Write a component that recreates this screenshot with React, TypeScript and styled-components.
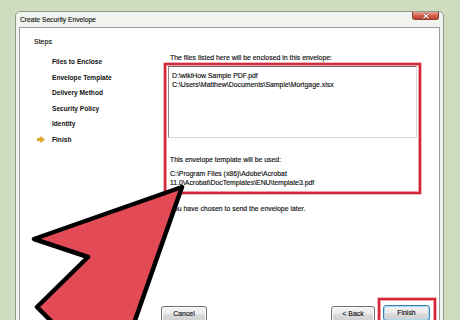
import React from 'react';
import styled, { createGlobalStyle } from 'styled-components';

const GlobalStyle = createGlobalStyle`
  html, body {
    margin: 0;
    padding: 0;
    background: #cfdcc0;
    font-family: "Liberation Sans", Arial, sans-serif;
    color: #111;
  }
`;

const Page = styled.div`
  position: relative;
  width: 460px;
  height: 320px;
  overflow: hidden;
  padding-top: 11px;
  box-sizing: border-box;
  -webkit-text-stroke: 0.15px currentColor;
`;

// окно мастера
const Window = styled.div`
  width: 429px;
  margin-left: 15px;
  box-sizing: border-box;
  border: 1px solid #8d9a8a;
  border-radius: 5px 5px 0 0;
  background: #f1f4ee;
  padding: 0 3px;
`;

const TitleBar = styled.div`
  height: 15px;
  display: flex;
  justify-content: space-between;
  align-items: flex-start;
`;

const Title = styled.div`
  font-size: 6.7px;
  line-height: 15px;
  padding-left: 1px;
  color: #1a1a1a;
`;

const CloseButton = styled.div`
  width: 27px;
  height: 8px;
  margin-right: 1px;
  box-sizing: border-box;
  border: 1px solid #8e3d31;
  border-top: none;
  border-radius: 0 0 3px 3px;
  background: linear-gradient(#eaa596, #d6644f 50%, #c3402e);
  display: flex;
  align-items: center;
  justify-content: center;
`;

const Content = styled.div`
  width: 421px;
  height: 300px;
  box-sizing: border-box;
  border: 1px solid #9c9c9c;
  background: #fff;
  display: flex;
  flex-direction: column;
`;

const Body = styled.div`
  height: 270px;
  display: grid;
  grid-template-columns: 144px 257px;
  align-content: start;
`;

const Sidebar = styled.div`
  padding: 9px 0 0 14px;
`;

const Heading = styled.div`
  font-size: 7px;
  line-height: 9px;
`;

const StepList = styled.div`
  margin-top: 7.7px;
  display: flex;
  flex-direction: column;
`;

const StepItem = styled.div`
  height: 15.6px;
  display: flex;
  align-items: center;
  padding-left: 3px;
  font-size: 6.6px;
  font-weight: 600;
  -webkit-text-stroke: 0;
`;

const Marker = styled.span`
  width: 15px;
  display: flex;
  align-items: center;
`;

const Main = styled.div`
  padding-top: 25px;
`;

const Caption = styled.div<{ $indent?: number }>`
  font-size: 6.9px;
  line-height: 9px;
  padding-left: ${({ $indent = 6 }) => $indent}px;
  white-space: nowrap;
`;

const Highlight = styled.div`
  border: 2px solid #d3283a;
  box-shadow: inset 0 0 0 1px #f29ca6, 0 0 0 0.5px #e0707c;
`;

const RedBox = styled(Highlight)`
  margin-top: 1px;
  padding: 1px 2px 5px 2px;
`;

const ListBox = styled.div`
  height: 72px;
  box-sizing: border-box;
  border-top: 1px solid #6b6b6b;
  border-left: 1px solid #8a8a8a;
  border-right: 1px solid #dadada;
  border-bottom: 1px solid #dadada;
  padding: 4px 0 0 3px;
`;

const Line = styled.div`
  font-size: 6.9px;
  line-height: 9px;
  white-space: nowrap;
`;

const TemplateText = styled.div<{ $gap: number }>`
  margin-top: ${({ $gap }) => $gap}px;
  padding-left: 2px;
`;

const Note = styled(Caption)`
  margin-top: 9.5px;
`;

const Footer = styled.div`
  height: 28px;
  display: flex;
  align-items: flex-start;
  padding: 0 3px 0 141px;
`;

const Button = styled.div<{ $w: number; $primary?: boolean }>`
  width: ${({ $w }) => $w}px;
  height: 16px;
  box-sizing: border-box;
  border: 1px solid ${({ $primary }) => ($primary ? '#3c7fb1' : '#707070')};
  border-radius: 3px;
  background: linear-gradient(#f3f3f3, #ebebeb 50%, #dddddd 51%, #cfcfcf);
  box-shadow: inset 0 0 0 1px ${({ $primary }) => ($primary ? '#a9d8f2' : '#fcfcfc')};
  font-size: 6.9px;
  line-height: 14px;
  text-align: center;
  color: #111;
`;

const PlainButton = styled(Button)`
  margin-top: 8px;
`;

const Spacer = styled.div`
  flex: 1;
`;

const FinishBox = styled(Highlight)`
  margin-left: 3px;
  padding: 5px 4px 6px 3px;
`;

const Pointer = styled.svg`
  position: absolute;
  left: 0;
  top: 0;
  pointer-events: none;
`;

const steps = [
  'Files to Enclose',
  'Envelope Template',
  'Delivery Method',
  'Security Policy',
  'Identity',
  'Finish',
];

const StepArrow = () => (
  <svg width="8" height="7" viewBox="0 0 8 7">
    <path
      d="M0.5 2.3 H3.8 V0.6 L7.4 3.5 L3.8 6.4 V4.7 H0.5 Z"
      fill="#f0b323"
      stroke="#b5790f"
      strokeWidth="0.6"
    />
  </svg>
);

const CloseGlyph = () => (
  <svg width="8" height="6" viewBox="0 0 8 6">
    <path d="M1.5 0.8 L6.5 5.2 M6.5 0.8 L1.5 5.2" stroke="#7a2a20" strokeWidth="2.4" />
    <path d="M1.5 0.8 L6.5 5.2 M6.5 0.8 L1.5 5.2" stroke="#fff" strokeWidth="1.3" />
  </svg>
);

export default function App() {
  return (
    <>
      <GlobalStyle />
      <Page>
        <Window>
          <TitleBar>
            <Title>Create Security Envelope</Title>
            <CloseButton>
              <CloseGlyph />
            </CloseButton>
          </TitleBar>
          <Content>
            <Body>
              <Sidebar>
                <Heading>Steps</Heading>
                <StepList>
                  {steps.map((s, i) => (
                    <StepItem key={s}>
                      <Marker>{i === steps.length - 1 && <StepArrow />}</Marker>
                      {s}
                    </StepItem>
                  ))}
                </StepList>
              </Sidebar>
              <Main>
                <Caption>The files listed here will be enclosed in this envelope:</Caption>
                <RedBox>
                  <ListBox>
                    <Line>D:\wikiHow Sample PDF.pdf</Line>
                    <Line>C:\Users\Matthew\Documents\Sample\Mortgage.xlsx</Line>
                  </ListBox>
                  <TemplateText $gap={16.5}>
                    <Line>This envelope template will be used:</Line>
                  </TemplateText>
                  <TemplateText $gap={5.5}>
                    <Line>C:\Program Files (x86)\Adobe\Acrobat</Line>
                    <Line>11.0\Acrobat\DocTemplates\ENU\template3.pdf</Line>
                  </TemplateText>
                </RedBox>
                <Note>You have chosen to send the envelope later.</Note>
              </Main>
            </Body>
            <Footer>
              <PlainButton $w={46}>Cancel</PlainButton>
              <Spacer />
              <PlainButton $w={44}>&lt; Back</PlainButton>
              <FinishBox>
                <Button $w={47} $primary>Finish</Button>
              </FinishBox>
            </Footer>
          </Content>
        </Window>
        <Pointer width="460" height="320" viewBox="0 0 460 320">
          <polygon
            points="182,187 34,239 88,257 37,307 97,367 112,352 127,343"
            fill="#e24a56"
            stroke="#000"
            strokeWidth="4.5"
            strokeLinejoin="round"
          />
        </Pointer>
      </Page>
    </>
  );
}
